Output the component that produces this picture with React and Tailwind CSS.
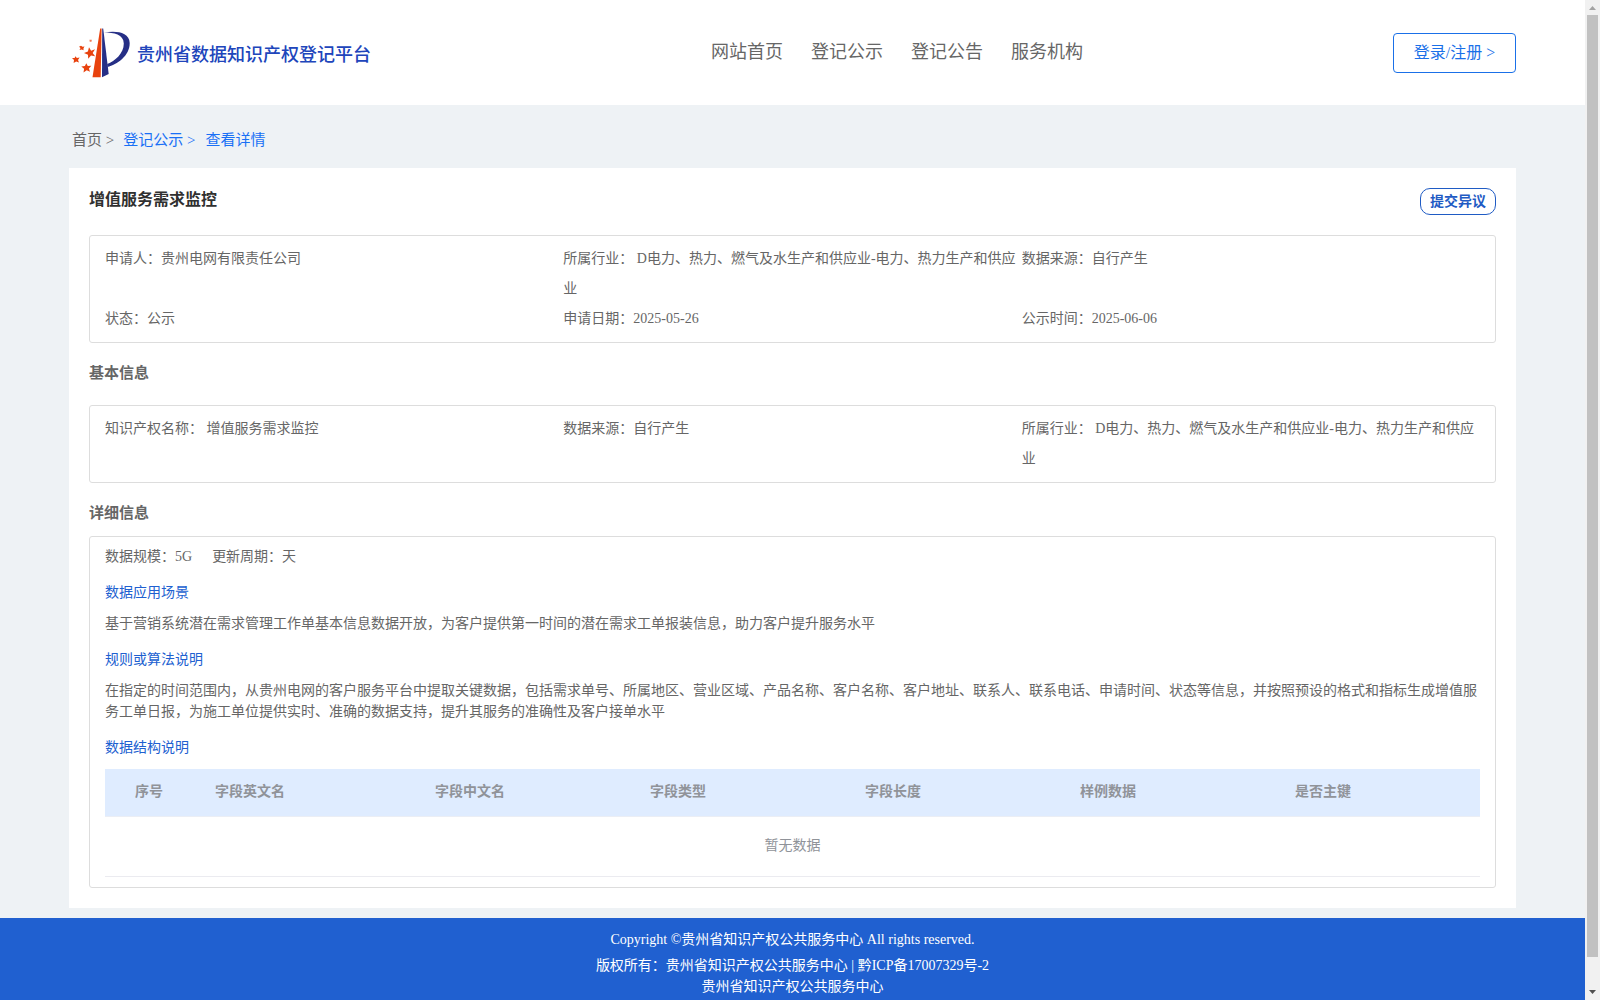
import React from 'react';

const NAV_ITEMS = ['网站首页', '登记公示', '登记公告', '服务机构'];

const INDUSTRY = 'D电力、热力、燃气及水生产和供应业-电力、热力生产和供应业';

const SUMMARY = [
    { label: '申请人：', value: '贵州电网有限责任公司' },
    { label: '所属行业： ', value: INDUSTRY },
    { label: '数据来源：', value: '自行产生' },
    { label: '状态：', value: '公示' },
    { label: '申请日期：', value: '2025-05-26' },
    { label: '公示时间：', value: '2025-06-06' },
];

const BASIC = [
    { label: '知识产权名称： ', value: '增值服务需求监控' },
    { label: '数据来源：', value: '自行产生' },
    { label: '所属行业： ', value: INDUSTRY },
];

const COLUMNS = [
    { title: '序号', className: 'w-[100px] pl-[30px]' },
    { title: '字段英文名', className: 'w-[220px] pl-[10px]' },
    { title: '字段中文名', className: 'w-[215px] pl-[10px]' },
    { title: '字段类型', className: 'w-[215px] pl-[10px]' },
    { title: '字段长度', className: 'w-[215px] pl-[10px]' },
    { title: '样例数据', className: 'w-[215px] pl-[10px]' },
    { title: '是否主键', className: 'w-[195px] pl-[10px]' },
];

function Logo() {
    return (
        <svg width="60" height="53" viewBox="0 0 60 53" className="shrink-0">
            <path d="M28.2 2.5 L29.6 2.5 L28.7 51.3 L20.5 51.3 Z" fill="#e8420e" />
            <path d="M30.2 2.5 L31.2 2.5 L36.7 48 L30 51.3 Z" fill="#262f86" />
            <path d="M32 6.6 C43 4.6 57.5 5.5 57.7 17 C57.8 30 45 38.5 35.5 41 L35.2 38 C43 35 51.8 27.5 51.8 17.5 C51.6 8.5 42 6.6 32 6.6 Z" fill="#262f86" />
            <g fill="#e8420e" transform="translate(-0.5 1.8)">
                <path d="M17.5 19.5 L19.6 23 L23.5 21.5 L21.2 25.2 L23.6 28.5 L19.5 27.8 L16.7 31 L16.5 26.9 L12.5 25.3 L16.4 23.6 Z" />
                <path d="M14.8 35.5 L16.3 38.3 L19.8 38 L17.4 40.6 L18.5 44 L15.2 42.4 L12 44.6 L12.6 41 L9.8 38.6 L13.4 38.3 Z" />
                <path d="M4 28.5 L5.3 30.3 L8.1 29.8 L6.5 32.2 L7.5 34.7 L4.7 33.8 L2.1 35.2 L2.5 32.3 L0.5 30.3 L3.1 30.3 Z" />
                <path d="M9.5 18 L11 19 L13 18.6 L12 20.5 L12 22.5 L10.2 21.7 L8 22.2 L9 20.3 L7.5 19 Z" />
                <path d="M18 12 L20.3 12 L20 14 L18.2 14 Z" opacity="0.7" />
            </g>
        </svg>
    );
}

function InfoGrid({ items }) {
    return (
        <div className="grid grid-cols-3 rounded-[3px] border border-[#dddddd] px-[15px] py-2 text-[14px] leading-[30px]">
            {items.map((item) => (
                <div key={item.label} className="whitespace-pre-wrap">{`${item.label}${item.value}`}</div>
            ))}
        </div>
    );
}

function Scrollbar() {
    return (
        <div className="flex h-full w-[15px] shrink-0 flex-col items-center bg-[#f1f1f1]">
            <svg width="15" height="15" viewBox="0 0 15 15" className="shrink-0">
                <path d="M4 10 L7.5 6 L11 10 Z" fill="#a3a3a3" />
            </svg>
            <div className="h-[942px] w-[11px] bg-[#c1c1c1]" />
            <svg width="15" height="15" viewBox="0 0 15 15" className="mt-auto shrink-0">
                <path d="M4 5 L11 5 L7.5 9 Z" fill="#505050" />
            </svg>
        </div>
    );
}

export default function App() {
    return (
        <div className="flex h-[1000px] w-[1600px] overflow-hidden bg-[#eef2f5] font-['Liberation_Serif','Noto_Sans_CJK_SC',serif] text-[#666666] [text-spacing-trim:space-all]">
            <div className="flex min-w-0 flex-1 flex-col">
                <header className="flex h-[105px] shrink-0 items-center bg-white pl-[72px] pr-[69px]">
                    <Logo />
                    <h1 className="ml-[5px] mt-[5px] w-[574px] text-[18px] font-medium leading-[24px] text-[#2045bb]">贵州省数据知识产权登记平台</h1>
                    <nav className="flex gap-7 text-[18px] leading-[24px] -mt-[2px]">
                        {NAV_ITEMS.map((item) => (
                            <a key={item}>{item}</a>
                        ))}
                    </nav>
                    <button className="ml-auto h-[40px] w-[123px] rounded-[4px] border border-[#1a70e8] pb-px text-[16px] leading-[38px] text-[#1a70e8]">登录/注册 &gt;</button>
                </header>

                <main className="px-[69px]">
                    <div className="flex h-[63px] items-center whitespace-pre pl-[3px] pt-[6px] text-[15px] leading-[20px]">
                        <span>首页 &gt;</span>
                        <a className="ml-[9px] text-[#1970f5]">登记公示 &gt;</a>
                        <a className="ml-[10px] text-[#1970f5]">查看详情</a>
                    </div>

                    <div className="h-[740px] bg-white px-5 pt-5">
                        <div className="mb-5 flex h-[27px] items-start justify-between">
                            <h2 className="text-[16px] font-bold leading-[24px] text-[#303030]">增值服务需求监控</h2>
                            <button className="h-[27px] w-[76px] rounded-[10px] border border-[#1f5bc4] text-[14px] font-bold leading-[25px] text-[#1f5bc4]">提交异议</button>
                        </div>
                        <InfoGrid items={SUMMARY} />
                        <h3 className="h-[62px] text-[15px] font-bold leading-[61px]">基本信息</h3>
                        <InfoGrid items={BASIC} />
                        <h3 className="h-[53px] text-[15px] font-bold leading-[61px]">详细信息</h3>

                        <div className="h-[352px] rounded-[3px] border border-[#dddddd] px-[15px] pt-[9px] text-[14px] leading-[21px]">
                            <div className="flex gap-5">
                                <span>数据规模：5G</span>
                                <span>更新周期：天</span>
                            </div>
                            <h4 className="mt-[15px] text-[#2060d0]">数据应用场景</h4>
                            <p className="mt-[10px]">基于营销系统潜在需求管理工作单基本信息数据开放，为客户提供第一时间的潜在需求工单报装信息，助力客户提升服务水平</p>
                            <h4 className="mt-[15px] text-[#2060d0]">规则或算法说明</h4>
                            <p className="mt-[10px]">在指定的时间范围内，从贵州电网的客户服务平台中提取关键数据，包括需求单号、所属地区、营业区域、产品名称、客户名称、客户地址、联系人、联系电话、申请时间、状态等信息，并按照预设的格式和指标生成增值服务工单日报，为施工单位提供实时、准确的数据支持，提升其服务的准确性及客户接单水平</p>
                            <h4 className="mt-[15px] text-[#2060d0]">数据结构说明</h4>
                            <div className="mt-[11px] text-[#909399]">
                                <div className="flex h-[48px] border-b border-[#ebeef5] bg-[#dfecff] text-[14px] font-bold leading-[46px]">
                                    {COLUMNS.map((col) => (
                                        <div key={col.title} className={col.className}>{col.title}</div>
                                    ))}
                                </div>
                                <div className="h-[60px] border-b border-[#ebebf0] text-center leading-[58px]">暂无数据</div>
                            </div>
                        </div>
                    </div>
                </main>

                <footer className="mt-[10px] h-[82px] shrink-0 bg-[#2060d0] pt-[11px] text-center text-[14px] leading-[21px] text-white">
                    <p>Copyright ©贵州省知识产权公共服务中心 All rights reserved.</p>
                    <p className="mt-[5px]">版权所有：贵州省知识产权公共服务中心 | 黔ICP备17007329号-2</p>
                    <p>贵州省知识产权公共服务中心</p>
                </footer>
            </div>
            <Scrollbar />
        </div>
    );
}
